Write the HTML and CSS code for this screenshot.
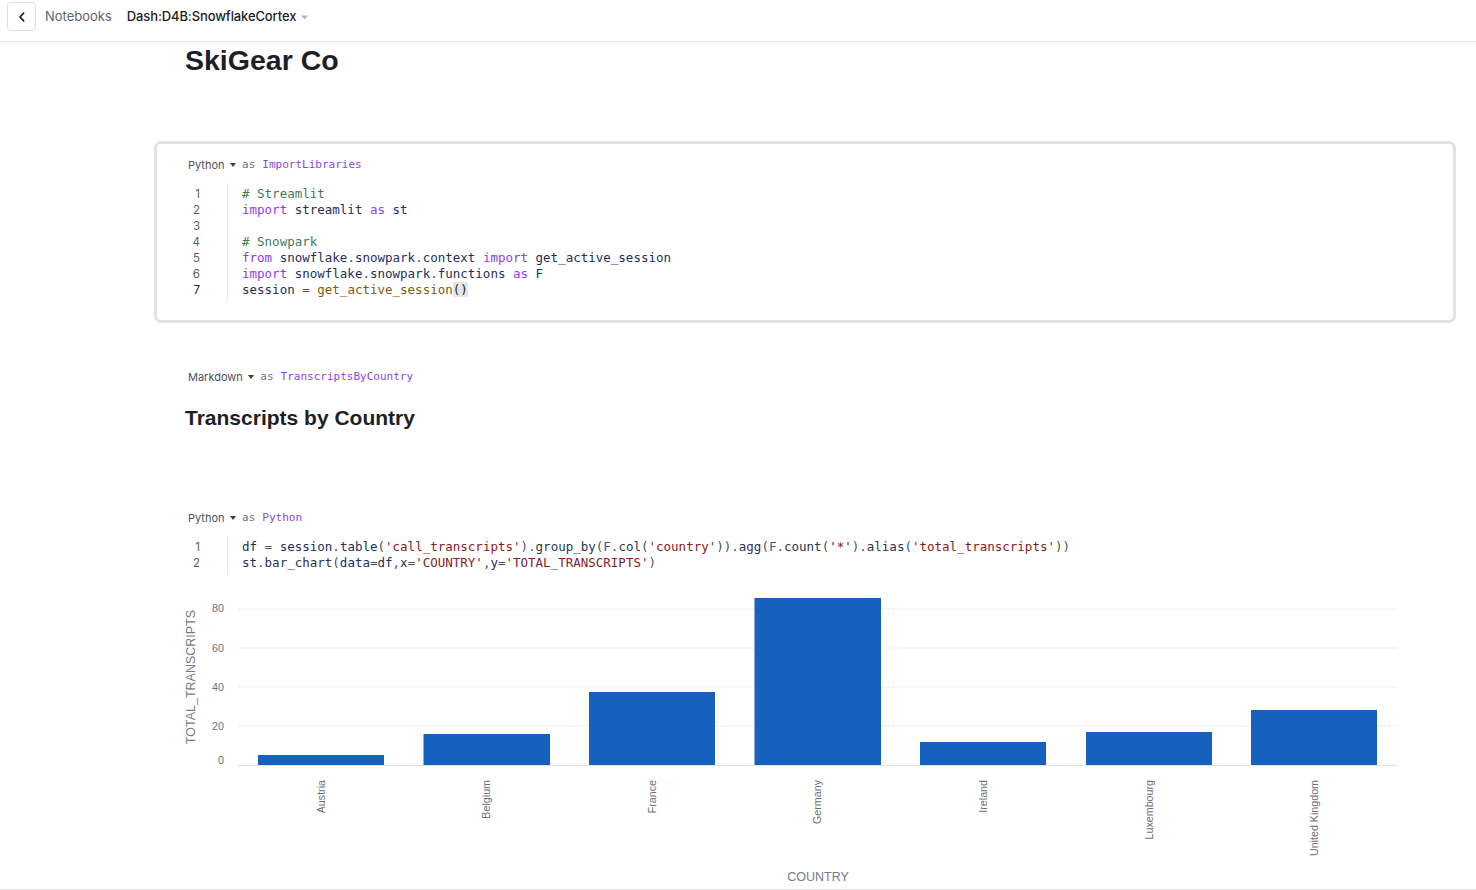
FILE: index.html
```html
<!DOCTYPE html>
<html lang="en">
<head>
<meta charset="utf-8">
<title>SkiGear Co</title>
<link rel="stylesheet" href="styles.css">
</head>
<body>
<header class="topbar">
  <button class="back" aria-label="Back">
    <svg width="14" height="14" viewBox="0 0 14 14"><path d="M8.6 3.2 L5 7 L8.6 10.8" fill="none" stroke="#1f2129" stroke-width="1.8" stroke-linecap="round" stroke-linejoin="round"/></svg>
  </button>
  <span class="crumb">Notebooks</span>
  <span class="nbname">Dash:D4B:SnowflakeCortex</span>
  <svg class="nbcaret" width="7" height="5" viewBox="0 0 7 5"><path d="M0 0.5 H7 L3.5 4.5 Z" fill="#b5b7bd"/></svg>
</header>
<main class="page">
  <h1 class="title">SkiGear Co</h1>

  <section class="cell selected">
    <div class="cell-label">
      <span class="lang">Python</span>
      <svg class="caret" width="6" height="4" viewBox="0 0 6 4"><path d="M0 0 H6 L3 4 Z" fill="#3b3e45"/></svg>
      <span class="as">as</span>
      <span class="cname">ImportLibraries</span>
    </div>
    <div class="code">
      <div class="nums">
        <div>1</div><div>2</div><div>3</div><div>4</div><div>5</div><div>6</div><div class="active">7</div>
      </div>
      <pre class="src"><span class="c"># Streamlit</span>
<span class="k">import</span> <span class="n">streamlit</span> <span class="k">as</span> <span class="n">st</span>

<span class="c"># Snowpark</span>
<span class="k">from</span> <span class="n">snowflake</span><span class="p">.</span><span class="n">snowpark</span><span class="p">.</span><span class="n">context</span> <span class="k">import</span> <span class="n">get_active_session</span>
<span class="k">import</span> <span class="n">snowflake</span><span class="p">.</span><span class="n">snowpark</span><span class="p">.</span><span class="n">functions</span> <span class="k">as</span> <span class="n">F</span>
<span class="n">session</span> <span class="o">=</span> <span class="f">get_active_session</span><span class="m">()</span></pre>
    </div>
  </section>

  <section class="cell">
    <div class="cell-label">
      <span class="lang">Markdown</span>
      <svg class="caret" width="6" height="4" viewBox="0 0 6 4"><path d="M0 0 H6 L3 4 Z" fill="#3b3e45"/></svg>
      <span class="as">as</span>
      <span class="cname">TranscriptsByCountry</span>
    </div>
    <h2 class="md-h">Transcripts by Country</h2>
  </section>

  <section class="cell last">
    <div class="cell-label">
      <span class="lang">Python</span>
      <svg class="caret" width="6" height="4" viewBox="0 0 6 4"><path d="M0 0 H6 L3 4 Z" fill="#3b3e45"/></svg>
      <span class="as">as</span>
      <span class="cname">Python</span>
    </div>
    <div class="code">
      <div class="nums">
        <div>1</div><div>2</div>
      </div>
      <pre class="src"><span class="n">df</span> <span class="o">=</span> <span class="n">session</span><span class="p">.</span><span class="n">table</span><span class="p">(</span><span class="s">'call_transcripts'</span><span class="p">).</span><span class="g">group_by</span><span class="p">(</span><span class="b">F</span><span class="p">.</span><span class="g">col</span><span class="p">(</span><span class="s">'country'</span><span class="p">)).</span><span class="g">agg</span><span class="p">(</span><span class="b">F</span><span class="p">.</span><span class="g">count</span><span class="p">(</span><span class="s">'*'</span><span class="p">).</span><span class="g">alias</span><span class="p">(</span><span class="s">'total_transcripts'</span><span class="p">))</span>
<span class="n">st</span><span class="p">.</span><span class="g">bar_chart</span><span class="p">(</span><span class="n">data</span><span class="o">=</span><span class="n">df</span><span class="p">,</span><span class="n">x</span><span class="o">=</span><span class="s">'COUNTRY'</span><span class="p">,</span><span class="n">y</span><span class="o">=</span><span class="s">'TOTAL_TRANSCRIPTS'</span><span class="p">)</span></pre>
    </div>

    <svg class="chart" width="1230" height="306" viewBox="0 0 1230 306">
      <g class="grid">
        <line x1="58" y1="29" x2="1217" y2="29"/>
        <line x1="58" y1="68" x2="1217" y2="68"/>
        <line x1="58" y1="107" x2="1217" y2="107"/>
        <line x1="58" y1="146" x2="1217" y2="146"/>
      </g>
      <line class="axis" x1="58" y1="185.5" x2="1217" y2="185.5"/>
      <g class="ylab">
        <text x="44" y="32">80</text>
        <text x="44" y="72">60</text>
        <text x="44" y="111">40</text>
        <text x="44" y="150">20</text>
        <text x="44" y="184">0</text>
      </g>
      <text class="atitle" transform="translate(14.5 97) rotate(-90)" text-anchor="middle">TOTAL_TRANSCRIPTS</text>
      <g class="bars">
        <rect x="78" y="175" width="126" height="10"/>
        <rect x="243.5" y="154" width="126.5" height="31"/>
        <rect x="409" y="112" width="126" height="73"/>
        <rect x="574.5" y="18" width="126.5" height="167"/>
        <rect x="740" y="162" width="126" height="23"/>
        <rect x="906" y="152" width="126" height="33"/>
        <rect x="1071" y="130" width="126" height="55"/>
      </g>
      <g class="xlab">
        <text transform="translate(144.8 200) rotate(-90)">Austria</text>
        <text transform="translate(310.3 200) rotate(-90)">Belgium</text>
        <text transform="translate(475.8 200) rotate(-90)">France</text>
        <text transform="translate(641.3 200) rotate(-90)">Germany</text>
        <text transform="translate(806.8 200) rotate(-90)">Ireland</text>
        <text transform="translate(972.8 200) rotate(-90)">Luxembourg</text>
        <text transform="translate(1137.8 200) rotate(-90)">United Kingdom</text>
      </g>
      <text class="atitle" x="638" y="301" text-anchor="middle">COUNTRY</text>
    </svg>
  </section>
</main>
</body>
</html>
```

FILE: styles.css
```css
* { box-sizing: border-box; }

html, body {
  margin: 0;
  padding: 0;
  height: 100%;
}

body {
  display: flex;
  flex-direction: column;
  height: 100vh;
  overflow: hidden;
  background: #ffffff;
  font-family: Inter, "Liberation Sans", Arial, sans-serif;
  color: #1f2129;
}

.topbar {
  flex: 0 0 42px;
  height: 42px;
  display: flex;
  align-items: flex-start;
  padding: 2px 0 0 7px;
  border-bottom: 1px solid #e4e4e6;
}

.back {
  width: 29px;
  height: 29px;
  padding: 0;
  margin: 0;
  border: 1px solid #dcdde0;
  border-radius: 4px;
  background: #fff;
  display: flex;
  align-items: center;
  justify-content: center;
}

.crumb {
  margin-left: 9px;
  font-size: 13px;
  line-height: 29px;
  color: #5f626b;
}

.nbname {
  margin-left: 15px;
  font-size: 13px;
  line-height: 29px;
  font-weight: 500;
  letter-spacing: -0.12px;
  color: #1f2129;
}

.nbcaret {
  margin: 13px 0 0 5px;
}

.page {
  flex: 1 1 auto;
  min-height: 0;
  overflow: hidden;
  padding: 0 20px 0 154px;
  border-bottom: 1px solid #dedfe2;
}

.title {
  margin: 1px 0 64px 31px;
  font-family: "Liberation Sans", Arial, sans-serif;
  font-size: 28.5px;
  line-height: 34px;
  font-weight: 700;
  color: #1e1f26;
}

.cell {
  border: 3px solid transparent;
  border-radius: 7px;
  padding: 15px 31px 18px;
  margin-bottom: 30px;
}

.cell.selected {
  border-color: #e2e3e5;
}

.cell.last {
  padding-bottom: 0;
  margin-bottom: 0;
}

.cell-label {
  display: flex;
  align-items: center;
  height: 12px;
  font-size: 11px;
  line-height: 12px;
}

.lang {
  color: #4e525b;
}

.caret {
  margin-left: 5px;
}

.as {
  margin-left: 6.5px;
  font-family: "DejaVu Sans Mono", "Liberation Mono", monospace;
  font-size: 11px;
  color: #6e717a;
}

.cname {
  margin-left: 7px;
  font-family: "DejaVu Sans Mono", "Liberation Mono", monospace;
  font-size: 11px;
  color: #8b45e6;
}

.code {
  display: flex;
  margin-top: 12px;
  padding: 0;
}

.nums {
  width: 40px;
  padding: 3px 27px 4px 0;
  text-align: right;
  border-right: 1px solid #ececee;
  font-family: Inter, "Liberation Sans", sans-serif;
  font-size: 11.5px;
  line-height: 16px;
  color: #5d6069;
}

.nums .active {
  color: #1f2129;
}

.src {
  margin: 0;
  padding: 3px 0 4px 14px;
  font-family: "DejaVu Sans Mono", "Liberation Mono", monospace;
  font-size: 12.5px;
  line-height: 16px;
  color: #22305a;
  white-space: pre;
}

.src .c { color: #3f7a5c; }
.src .k { color: #8a3ee6; }
.src .n { color: #22305a; }
.src .g { color: #2e3549; }
.src .f { color: #7a5b14; }
.src .s { color: #861c1c; }
.src .p { color: #4a4f5c; }
.src .o { color: #4a4f5c; }
.src .b { color: #2d5b9b; }
.src .m { color: #1f2129; background: #e6e6e8; }

.md-h {
  margin: 22px 0 12px -3px;
  font-family: "Liberation Sans", Arial, sans-serif;
  font-size: 21px;
  line-height: 26px;
  font-weight: 700;
  color: #1e1f26;
}

.chart {
  display: block;
  margin: 5px 0 0 -8px;
  font-family: "Liberation Sans", Arial, sans-serif;
}

.chart .grid line {
  stroke: #eceef1;
  stroke-width: 1;
}

.chart .axis {
  stroke: #dfe3e9;
  stroke-width: 1;
}

.chart .ylab text {
  font-size: 10.7px;
  fill: #6c6f79;
  text-anchor: end;
}

.chart .xlab text {
  font-size: 10.7px;
  fill: #6c6f79;
  text-anchor: end;
}

.chart .atitle {
  font-size: 12.5px;
  fill: #777a84;
}

.chart .bars rect {
  fill: #1660be;
}
```
